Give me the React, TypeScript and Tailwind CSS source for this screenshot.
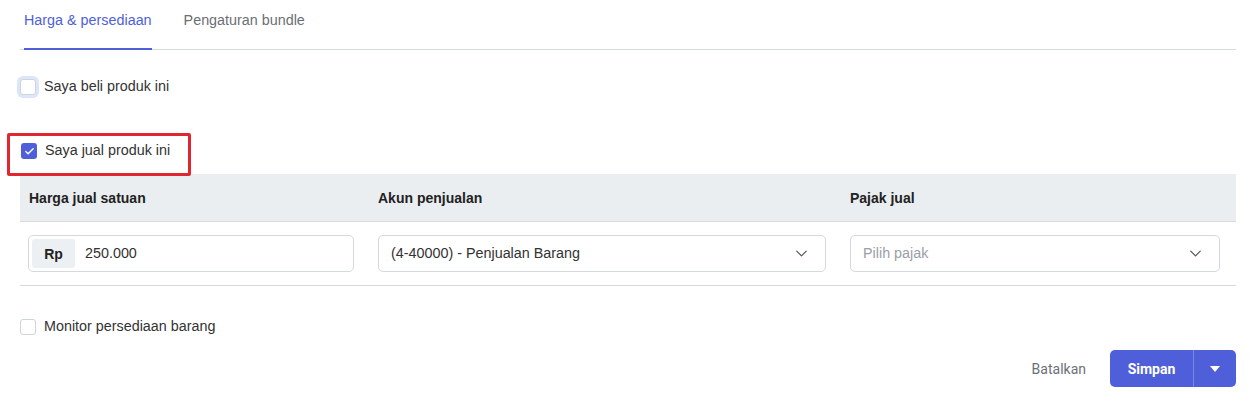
import { ChevronDown, Check } from "lucide-react";

function Checkbox({ checked, focused }: { checked?: boolean; focused?: boolean }) {
  return (
    <span
      className={
        "flex h-4 w-4 shrink-0 items-center justify-center rounded-[3px] " +
        (checked
          ? "bg-[#4f5fd9]"
          : "border border-[#cfd4da] bg-white") +
        (focused ? " ring-[3px] ring-[#dde5fa]" : "")
      }
    >
      {checked && <Check size={11} strokeWidth={3} className="text-white" />}
    </span>
  );
}

function Select({ value, placeholder }: { value?: string; placeholder?: string }) {
  return (
    <div className="flex h-[37px] w-full items-center justify-between rounded-[5px] border border-[#d5d9de] bg-white pl-3 pr-[14px]">
      <span className={value ? "text-[#333]" : "text-[#9aa0a6]"}>{value ?? placeholder}</span>
      <ChevronDown size={19} strokeWidth={1.5} className="text-[#555]" />
    </div>
  );
}

export default function App() {
  return (
    <div className="bg-white pl-5 pr-6 font-['Liberation_Sans',Arial,sans-serif] text-[14.35px] text-[#333]">
      {/* Tabs */}
      <div className="flex h-[50px] gap-8 border-b border-[#d7dbe0] pl-1">
        <div className="-mb-px flex h-[50px] items-start border-b-2 border-[#4f5fd9] pt-[10px] text-[#4f5fd9]">
          Harga &amp; persediaan
        </div>
        <div className="flex h-[50px] items-start pt-[10px] text-[#6b6f75]">Pengaturan bundle</div>
      </div>

      {/* Beli */}
      <label className="mt-[27px] flex h-5 items-center gap-2">
        <Checkbox focused />
        <span>Saya beli produk ini</span>
      </label>

      {/* Jual */}
      <div className="relative mt-[44px] flex h-5 items-center gap-2 pl-px">
        <Checkbox checked />
        <span>Saya jual produk ini</span>
        <div className="pointer-events-none absolute left-[-13px] top-[-8px] h-[43px] w-[184px] rounded-[2px] border-[3px] border-[#e0262e]" />
      </div>

      {/* Table */}
      <div className="mt-[13px]">
        <div className="grid h-[48px] grid-cols-[350px_472px_1fr] items-center border-b border-[#d7dbe0] bg-[#ebeef1] text-sm font-bold text-[#222]">
          <div className="pl-[9px]">Harga jual satuan</div>
          <div className="pl-2">Akun penjualan</div>
          <div className="pl-2">Pajak jual</div>
        </div>
        <div className="grid grid-cols-[350px_472px_1fr] items-center border-b border-[#d7dbe0] py-[13px]">
          <div className="pl-2 pr-4">
            <div className="flex h-[37px] items-center rounded-[5px] border border-[#d5d9de] bg-white p-[3px]">
              <span className="flex h-full w-[43px] items-center justify-center rounded-[3px] bg-[#edf0f3] text-sm font-bold text-[#222]">
                Rp
              </span>
              <span className="pl-[10px]">250.000</span>
            </div>
          </div>
          <div className="pl-2 pr-4">
            <Select value="(4-40000) - Penjualan Barang" />
          </div>
          <div className="pl-2 pr-4">
            <Select placeholder="Pilih pajak" />
          </div>
        </div>
      </div>

      {/* Monitor */}
      <label className="mt-[31px] flex h-5 items-center gap-2">
        <Checkbox />
        <span>Monitor persediaan barang</span>
      </label>

      {/* Actions */}
      <div className="mt-[13px] flex items-center justify-end gap-6 pb-[22px] font-['Roboto',sans-serif]">
        <button className="text-sm text-[#6b7078]">Batalkan</button>
        <div className="flex h-[37px] w-[126px] overflow-hidden rounded-[5px] bg-[#4f5fd9] text-white">
          <button className="flex w-[83px] items-center justify-center text-sm font-bold">Simpan</button>
          <div className="w-px bg-[#7a86e3]" />
          <button className="flex flex-1 items-center justify-center">
            <svg width="10" height="6" viewBox="0 0 10 6">
              <path d="M0 0h10L5 6z" fill="white" />
            </svg>
          </button>
        </div>
      </div>
    </div>
  );
}
